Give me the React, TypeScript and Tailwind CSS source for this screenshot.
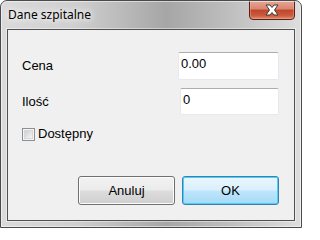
import React from "react";

export default function App() {
  return (
    <div
      className="w-[302px] h-[228px] relative overflow-hidden rounded-t-[7px] border border-[#4a4a4a] flex flex-col bg-[linear-gradient(90deg,#dadada_0%,#cfcfcf_25%,#b4b4b4_45%,#a6a6a6_55%,#bdbdbd_75%,#dedede_100%)]"
      style={{ fontFamily: '"Liberation Sans", Arial, sans-serif' }}
    >
      <div className="absolute inset-0 rounded-t-[6px] border border-[#ffffff80] pointer-events-none" />
      {/* Title bar */}
      <div className="h-[28px] flex items-start justify-between shrink-0">
        <div
          className="pl-[7px] pt-[7px] text-[12px] leading-[14px] text-black"
          style={{ fontFamily: '"Noto Sans", "Open Sans", sans-serif', textShadow: "0 0 8px #fff, 0 0 6px #fff" }}
        >
          Dane szpitalne
        </div>
        <div className="mr-[6px] mt-[-1px] w-[46px] h-[20px] rounded-b-[4px] border border-[#5a2018] bg-[linear-gradient(180deg,#e8a593_0%,#d88672_45%,#c0432c_50%,#cc5a3c_80%,#e08a6a_100%)] flex items-center justify-center shadow-[inset_0_0_0_1px_#f0b8a866]">
          <svg width="16" height="12" viewBox="0 0 16 12">
            <path
              d="M2 1 L6 1 L8 3.5 L10 1 L14 1 L10.5 6 L14 11 L10 11 L8 8.5 L6 11 L2 11 L5.5 6 Z"
              fill="#ffffff"
              stroke="#3a3a3a"
              strokeWidth="1"
              strokeLinejoin="round"
            />
          </svg>
        </div>
      </div>
      {/* Client area */}
      <div className="mx-[6px] mb-[6px] flex-1 border border-[#505050] shadow-[0_0_0_1px_#ffffff70] bg-[#f0f0f0] flex flex-col text-[13px] text-black">
        <div className="flex items-center justify-between pl-[14px] pr-[15px] mt-[22px]">
          <span>Cena</span>
          <div className="w-[101px] h-[28px] bg-white border border-[#e3e9ef] border-t-[#abadb3] rounded-[2px] px-[2px] pt-[2px] leading-[18px]">
            0.00
          </div>
        </div>
        <div className="flex items-center justify-between pl-[14px] pr-[15px] mt-[8px]">
          <span>Ilość</span>
          <div className="w-[99px] h-[27px] bg-white border border-[#e3e9ef] border-t-[#abadb3] rounded-[2px] px-[2px] pt-[2px] leading-[18px]">
            0
          </div>
        </div>
        <div className="flex items-center pl-[14px] mt-[12px] h-[14px]">
          <div className="w-[13px] h-[13px] border border-[#8e8f8f] bg-[#f4f4f4] p-[1px]">
            <div className="w-full h-full bg-[linear-gradient(135deg,#cbcfd5,#f6f6f6)] border border-[#d8d8d8]" />
          </div>
          <span className="ml-[3px]">Dostępny</span>
        </div>
        <div className="flex justify-end gap-[7px] pr-[15px] mt-[35px]">
          <button className="w-[97px] h-[29px] rounded-[3px] border border-[#707070] bg-[linear-gradient(180deg,#f2f2f2_0%,#ebebeb_49%,#dddddd_51%,#cfcfcf_100%)] shadow-[inset_0_0_0_1px_#fcfcfc] text-[13px]">
            Anuluj
          </button>
          <button className="w-[97px] h-[29px] rounded-[3px] border border-[#3c7fb1] bg-[linear-gradient(180deg,#eaf6fd_0%,#d9f0fc_49%,#bee6fd_51%,#a7d9f5_100%)] shadow-[inset_0_0_0_1px_#48d0f8] text-[13px]">
            OK
          </button>
        </div>
      </div>
    </div>
  );
}
